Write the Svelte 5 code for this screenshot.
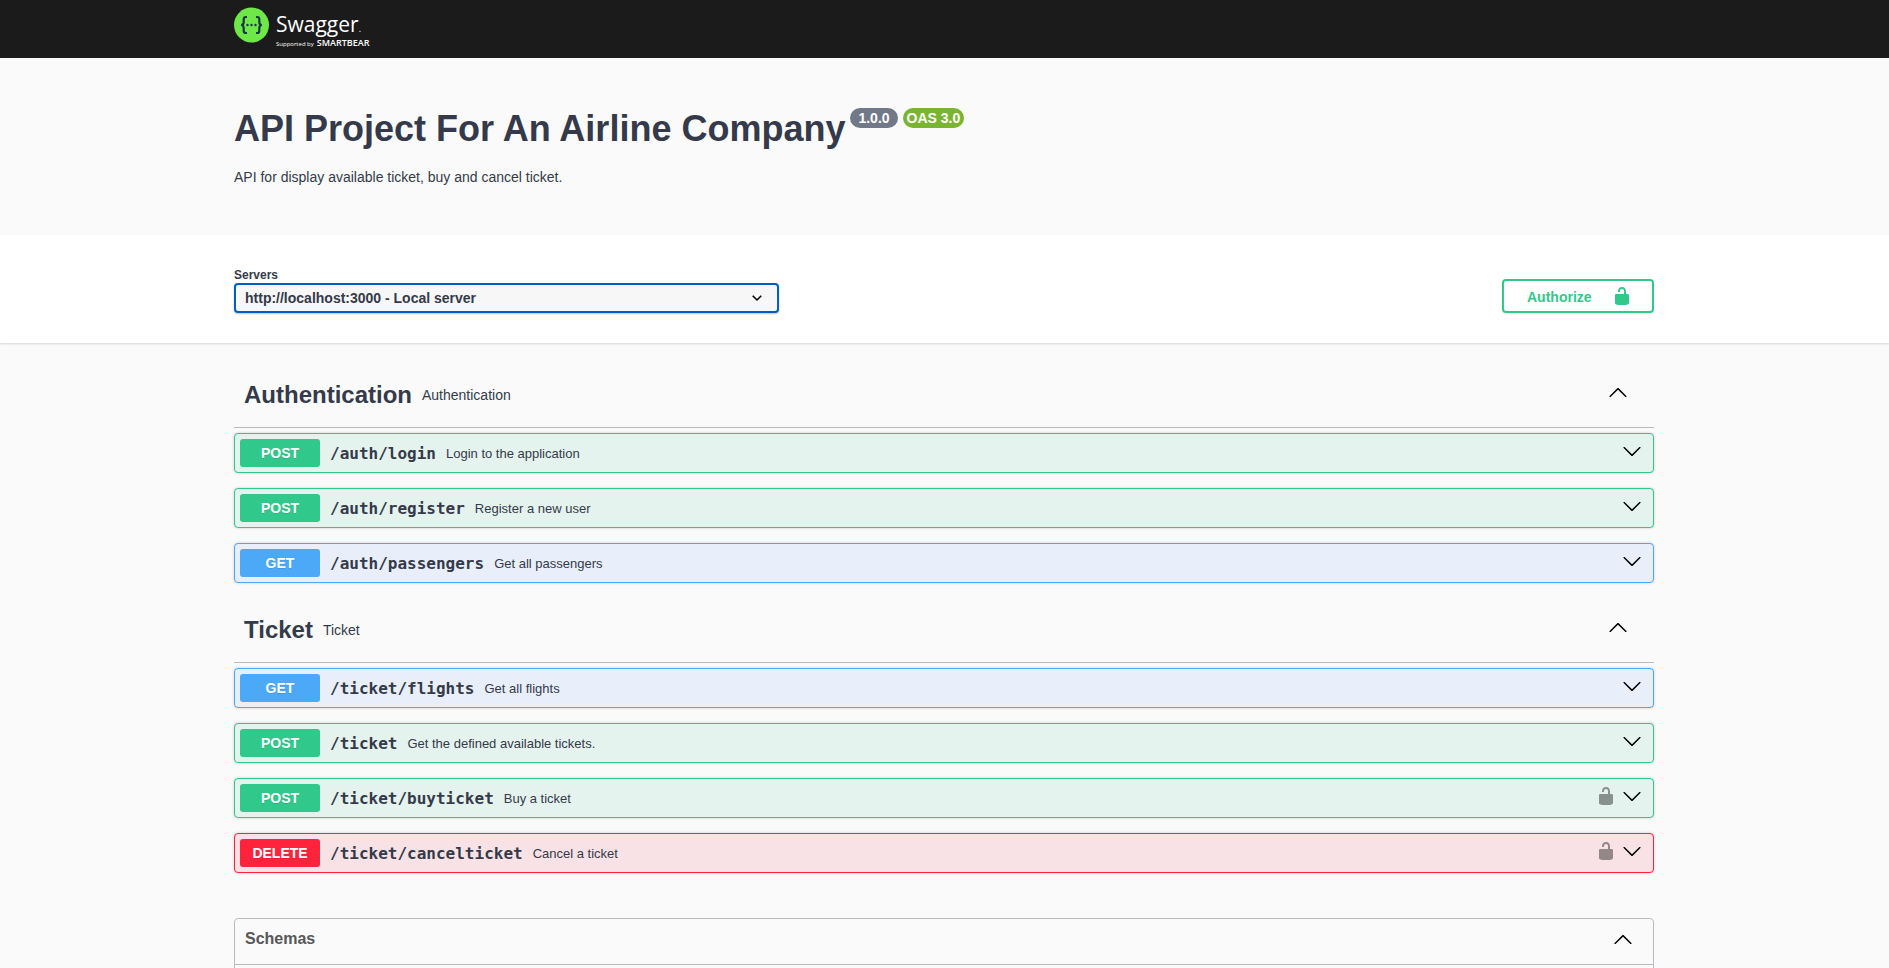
<script>
  const sections = [
    {
      name: 'Authentication',
      description: 'Authentication',
      operations: [
        { method: 'post', path: '/auth/login', summary: 'Login to the application' },
        { method: 'post', path: '/auth/register', summary: 'Register a new user' },
        { method: 'get', path: '/auth/passengers', summary: 'Get all passengers' }
      ]
    },
    {
      name: 'Ticket',
      description: 'Ticket',
      operations: [
        { method: 'get', path: '/ticket/flights', summary: 'Get all flights' },
        { method: 'post', path: '/ticket', summary: 'Get the defined available tickets.' },
        { method: 'post', path: '/ticket/buyticket', summary: 'Buy a ticket', secured: true },
        { method: 'delete', path: '/ticket/cancelticket', summary: 'Cancel a ticket', secured: true }
      ]
    }
  ];
</script>

{#snippet arrowUp()}
  <svg width="20" height="20" viewBox="0 0 20 20" aria-hidden="true">
    <path d="M17.418 14.908c.272.268.709.268.979 0s.271-.701 0-.969l-7.908-7.83c-.27-.268-.707-.268-.979 0l-7.908 7.83c-.27.268-.27.701 0 .969.271.268.709.268.979 0L10 7.767l7.418 7.141z" />
  </svg>
{/snippet}

{#snippet arrowDown()}
  <svg width="20" height="20" viewBox="0 0 20 20" aria-hidden="true">
    <path d="M17.418 6.109c.272-.268.709-.268.979 0s.271.701 0 .969l-7.908 7.83c-.27.268-.707.268-.979 0l-7.908-7.83c-.27-.268-.27-.701 0-.969.271-.268.709-.268.979 0L10 13.25l7.418-7.141z" />
  </svg>
{/snippet}

{#snippet unlocked()}
  <svg width="20" height="20" viewBox="0 0 20 20" aria-hidden="true" fill="currentColor">
    <path d="M15.8 8H14V5.6C14 2.703 12.665 1 10 1 7.334 1 6 2.703 6 5.6V6h2v-.801C8 3.754 8.797 3 10 3c1.203 0 2 .754 2 2.199V8H4c-.553 0-1 .646-1 1.199V17c0 .549.428 1.139.951 1.307l1.197.387C5.672 18.861 6.55 19 7.1 19h5.8c.549 0 1.428-.139 1.951-.307l1.196-.387c.524-.167.953-.757.953-1.306V9.199C17 8.646 16.352 8 15.8 8z" />
  </svg>
{/snippet}

<header class="topbar">
  <div class="wrapper">
    <a class="logo" href="#top">
      <svg class="mark" width="36" height="36" viewBox="0 0 36 36" aria-hidden="true">
        <circle cx="17.5" cy="18" r="17.500" fill="#6ee846" />
        <g fill="none" stroke="#173647" stroke-width="2.200">
          <path d="M13 10h-1c-1.600 0-2.300.7-2.300 2.300v2.600c0 1.900-.7 2.900-2.500 3.100 1.800.2 2.500 1.200 2.500 3.100v2.600c0 1.600.7 2.300 2.300 2.300h1" />
          <path d="M22 10h1c1.600 0 2.300.7 2.300 2.300v2.600c0 1.900.7 2.900 2.500 3.100-1.800.2-2.500 1.200-2.500 3.100v2.600c0 1.600-.7 2.300-2.300 2.300h-1" />
        </g>
        <g fill="#173647">
          <circle cx="13.500" cy="18" r="1.200" />
          <circle cx="17.500" cy="18" r="1.200" />
          <circle cx="21.500" cy="18" r="1.200" />
        </g>
      </svg>
      <span class="words">
        <span class="brand">Swagger<span class="dot">.</span></span>
        <span class="tagline">Supported by <b>SMARTBEAR</b></span>
      </span>
    </a>
  </div>
</header>

<main id="top">
  <section class="info wrapper">
    <h1>
      API Project For An Airline Company
      <span class="badges"><span class="badge">1.0.0</span><span class="badge oas">OAS 3.0</span></span>
    </h1>
    <p>API for display available ticket, buy and cancel ticket.</p>
  </section>

  <section class="scheme">
    <div class="wrapper scheme-row">
      <div class="servers">
        <label for="servers">Servers</label>
        <div class="select">
          <select id="servers">
            <option>http://localhost:3000 - Local server</option>
          </select>
          <svg width="20" height="20" viewBox="0 0 20 20" aria-hidden="true">
            <path d="M5.700 7.800L10 12l4.300-4.200" fill="none" stroke="#000" stroke-width="1.600" />
          </svg>
        </div>
      </div>
      <button class="authorize" type="button">
        <span>Authorize</span>
        {@render unlocked()}
      </button>
    </div>
  </section>

  <div class="wrapper operations">
    {#each sections as section}
      <section>
        <div class="tag">
          <h2>{section.name}</h2>
          <p>{section.description}</p>
          <button class="icon" type="button" aria-label="Collapse section">{@render arrowUp()}</button>
        </div>
        <div class="list">
          {#each section.operations as op}
            <div class="operation {op.method}">
              <span class="method">{op.method.toUpperCase()}</span>
              <span class="path">{op.path}</span>
              <span class="summary">{op.summary}</span>
              <div class="controls">
                {#if op.secured}
                  <button class="icon lock" type="button" aria-label="Authorization">{@render unlocked()}</button>
                {/if}
                <button class="icon" type="button" aria-label="Expand operation">{@render arrowDown()}</button>
              </div>
            </div>
          {/each}
        </div>
      </section>
    {/each}

    <section class="models">
      <div class="models-head">
        <h3>Schemas</h3>
        <button class="icon" type="button" aria-label="Collapse schemas">{@render arrowUp()}</button>
      </div>
      <div class="models-body"></div>
    </section>
  </div>
</main>

<style>
  :global(html) {
    background: #fafafa;
    overflow: hidden;
  }
  :global(body) {
    margin: 0;
    color: #343a4a;
    font-family: "Liberation Sans", Arial, sans-serif;
    font-size: 14px;
  }
  :global(#app) {
    height: 100vh;
    overflow: hidden;
  }
  h1, h2, h3, p {
    margin: 0;
  }
  svg {
    display: block;
    flex: none;
  }
  .wrapper {
    box-sizing: border-box;
    width: 100%;
    max-width: 1461px;
    margin: 0 auto;
    padding: 0 21px 0 20px;
  }
  .topbar {
    box-sizing: border-box;
    height: 58px;
    padding-top: 7px;
    background: #1b1b1b;
  }
  .logo {
    display: inline-flex;
    gap: 6px;
    color: #fff;
    text-decoration: none;
    font-family: "Open Sans", sans-serif;
  }
  .words {
    display: flex;
    flex-direction: column;
    gap: 3px;
  }
  .brand {
    padding-top: 5px;
    font-size: 21px;
    line-height: 24px;
    font-weight: 400;
  }
  .dot {
    font-size: 9px;
    line-height: 9px;
  }
  .tagline {
    font-size: 6px;
    line-height: 8px;
    height: 8px;
    display: flex;
    align-items: baseline;
    gap: 3px;
    white-space: nowrap;
  }
  .tagline b {
    font-size: 9px;
    font-weight: 600;
  }
  .info {
    height: 177px;
    padding-top: 51px;
  }
  h1 {
    display: flex;
    gap: 5px;
    font-size: 36px;
    line-height: 40px;
    white-space: nowrap;
  }
  .badges {
    display: flex;
    gap: 5px;
    margin-top: -1px;
  }
  .badge {
    height: 20px;
    padding: 0 8px;
    border-radius: 10px;
    background: #717888;
    color: #fff;
    font-size: 14px;
    line-height: 20px;
  }
  .badge.oas {
    padding: 0 4px;
    background: #7ab532;
  }
  .info p {
    margin-top: 20px;
    line-height: 16px;
  }
  .scheme {
    padding: 30px 0;
    background: #fff;
    box-shadow: 0 1px 2px rgba(0, 0, 0, 0.15);
  }
  .scheme-row {
    display: flex;
    justify-content: space-between;
    align-items: flex-end;
  }
  .servers {
    display: flex;
    flex-direction: column;
    padding-top: 3px;
  }
  label {
    padding-bottom: 1px;
    font-size: 12px;
    line-height: 14px;
    font-weight: 700;
  }
  .select {
    display: grid;
    align-items: center;
  }
  .select > * {
    grid-area: 1 / 1;
  }
  .select svg {
    justify-self: end;
    margin-right: 12px;
    pointer-events: none;
  }
  select {
    appearance: none;
    box-sizing: border-box;
    width: 545px;
    height: 30px;
    padding: 0 40px 0 9px;
    border: 2px solid #005dc1;
    border-radius: 4px;
    background: #f7f7f7;
    box-shadow: 0 1px 2px rgba(0, 0, 0, 0.25);
    color: #343a4a;
    font: 700 14px "Liberation Sans", Arial, sans-serif;
  }
  .authorize {
    display: flex;
    align-items: center;
    justify-content: space-between;
    box-sizing: border-box;
    width: 152px;
    height: 34px;
    padding: 0 23px;
    border: 2px solid #31c88b;
    border-radius: 4px;
    background: transparent;
    box-shadow: 0 1px 2px rgba(0, 0, 0, 0.1);
    color: #31c88b;
    font: 700 14px "Liberation Sans", Arial, sans-serif;
  }
  .authorize span {
    padding-top: 2px;
  }
  .authorize svg {
    margin-right: -3px;
  }
  .operations {
    padding-top: 20px;
  }
  .icon {
    padding: 0;
    border: 0;
    background: none;
    color: #000;
  }
  .tag {
    display: flex;
    align-items: center;
    gap: 10px;
    box-sizing: border-box;
    height: 65px;
    margin-bottom: 5px;
    padding: 0 26px 0 10px;
    border-bottom: 1px solid #b9babf;
  }
  h2 {
    font-size: 24px;
    line-height: 28px;
  }
  .tag .icon {
    margin-left: auto;
    padding-bottom: 6px;
  }
  .list {
    display: flex;
    flex-direction: column;
    gap: 15px;
    padding-bottom: 15px;
  }
  .operation {
    display: flex;
    align-items: center;
    gap: 10px;
    box-sizing: border-box;
    height: 40px;
    padding: 0 11px 0 5px;
    border: 1px solid;
    border-radius: 4px;
    box-shadow: 0 0 3px rgba(0, 0, 0, 0.19);
  }
  .method {
    width: 80px;
    border-radius: 3px;
    color: #fff;
    font-weight: 700;
    line-height: 28px;
    text-align: center;
    text-shadow: 0 1px 0 rgba(0, 0, 0, 0.1);
  }
  .post {
    border-color: #31c88b;
    background: #e5f3ee;
  }
  .post .method {
    background: #31c88b;
  }
  .get {
    border-color: #4ba9f8;
    background: #e8effa;
  }
  .get .method {
    background: #4ba9f8;
  }
  .delete {
    border-color: #ff243b;
    background: #f9e2e5;
  }
  .delete .method {
    background: #ff243b;
  }
  .path {
    font-family: "DejaVu Sans Mono", monospace;
    font-size: 16px;
    font-weight: 700;
  }
  .summary {
    font-size: 13px;
  }
  .controls {
    display: flex;
    gap: 6px;
    margin-left: auto;
    padding-bottom: 4px;
  }
  .lock {
    opacity: 0.4;
  }
  .models {
    margin-top: 30px;
    border: 1px solid #b9babf;
    border-radius: 4px;
  }
  .models-head {
    display: flex;
    align-items: center;
    justify-content: space-between;
    height: 45px;
    padding: 0 20px 0 10px;
    border-bottom: 1px solid #b9babf;
  }
  .models-head h3 {
    padding-bottom: 6px;
    color: #575757;
    font-size: 16px;
    line-height: 20px;
  }
  .models-head .icon {
    padding-bottom: 6px;
  }
  .models-body {
    height: 40px;
  }
</style>
